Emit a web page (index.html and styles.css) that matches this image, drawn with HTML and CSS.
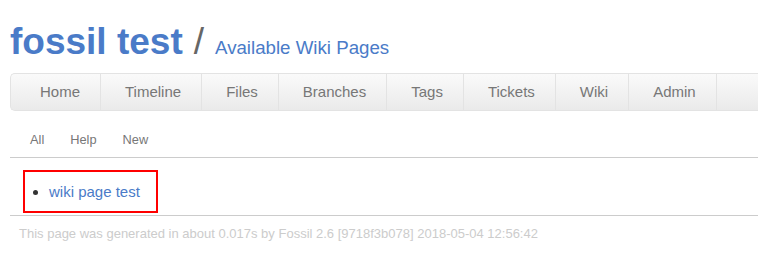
FILE: index.html
```html
<!DOCTYPE html>
<html lang="en">
<head>
    <meta charset="UTF-8">
    <title>fossil test: Available Wiki Pages</title>
    <link rel="stylesheet" href="styles.css">
</head>
<body>
    <div class="page">
        <div class="header">
            <h1 class="title">fossil test</h1>
            <span class="slash">/</span>
            <span class="page-title">Available Wiki Pages</span>
        </div>

        <div class="mainmenu">
            <a href="#">Home</a>
            <a href="#">Timeline</a>
            <a href="#">Files</a>
            <a href="#">Branches</a>
            <a href="#">Tags</a>
            <a href="#">Tickets</a>
            <a href="#">Wiki</a>
            <a href="#">Admin</a>
        </div>

        <div class="submenu">
            <a href="#">All</a>
            <a href="#">Help</a>
            <a href="#">New</a>
        </div>

        <div class="content">
            <ul class="wikilist">
                <li><a href="#">wiki page test</a></li>
            </ul>
        </div>

        <div class="footer">
            This page was generated in about 0.017s by Fossil 2.6 [9718f3b078] 2018-05-04 12:56:42
        </div>
    </div>
</body>
</html>
```

FILE: styles.css
```css
html, body {
    overflow: hidden;
}
body {
    margin: 0;
    font-family: "Liberation Sans", Arial, Helvetica, sans-serif;
    color: #333;
    background-color: #fff;
}
a {
    color: #4a7bc8;
    text-decoration: none;
}
.page {
    padding: 21px 0 0 10px;
    margin-right: -40px;
}
.header {
    display: flex;
    align-items: baseline;
    height: 42px;
    margin-bottom: 10px;
}
.title {
    margin: 0;
    font-size: 37px;
    font-weight: bold;
    color: #4a7bc8;
    line-height: 42px;
}
.slash {
    font-size: 37px;
    color: #666;
    margin: 0 11px 0 11px;
}
.page-title {
    font-size: 18.7px;
    color: #4a7bc8;
}
.mainmenu {
    display: flex;
    gap: 4px;
    padding-left: 9px;
    background: linear-gradient(#fafafa, #eaeaea);
    border: 1px solid #e3e3e3;
    border-right: none;
    border-radius: 5px 0 0 5px;
    font-size: 15px;
    height: 36px;
}
.mainmenu a {
    padding: 9px 20px;
    line-height: 18px;
    color: #777;
    border-right: 1px solid #e3e3e3;
}
.submenu {
    margin-top: 11px;
    padding: 10px 0 10px 9px;
    font-size: 12.8px;
    line-height: 15px;
    border-bottom: 1px solid #ccc;
    display: flex;
    gap: 4px;
}
.submenu a {
    padding: 0 11px;
    color: #777;
}
.content {
    padding: 12px 0 2px 13px;
}
.wikilist {
    display: inline-block;
    margin: 0;
    padding: 11px 16px 11px 24px;
    border: 2px solid #f00;
    font-size: 15px;
    line-height: 17px;
    color: #333;
}
.footer {
    border-top: 1px solid #ccc;
    padding: 10px 9px;
    font-size: 13px;
    color: #ccc;
}
```
